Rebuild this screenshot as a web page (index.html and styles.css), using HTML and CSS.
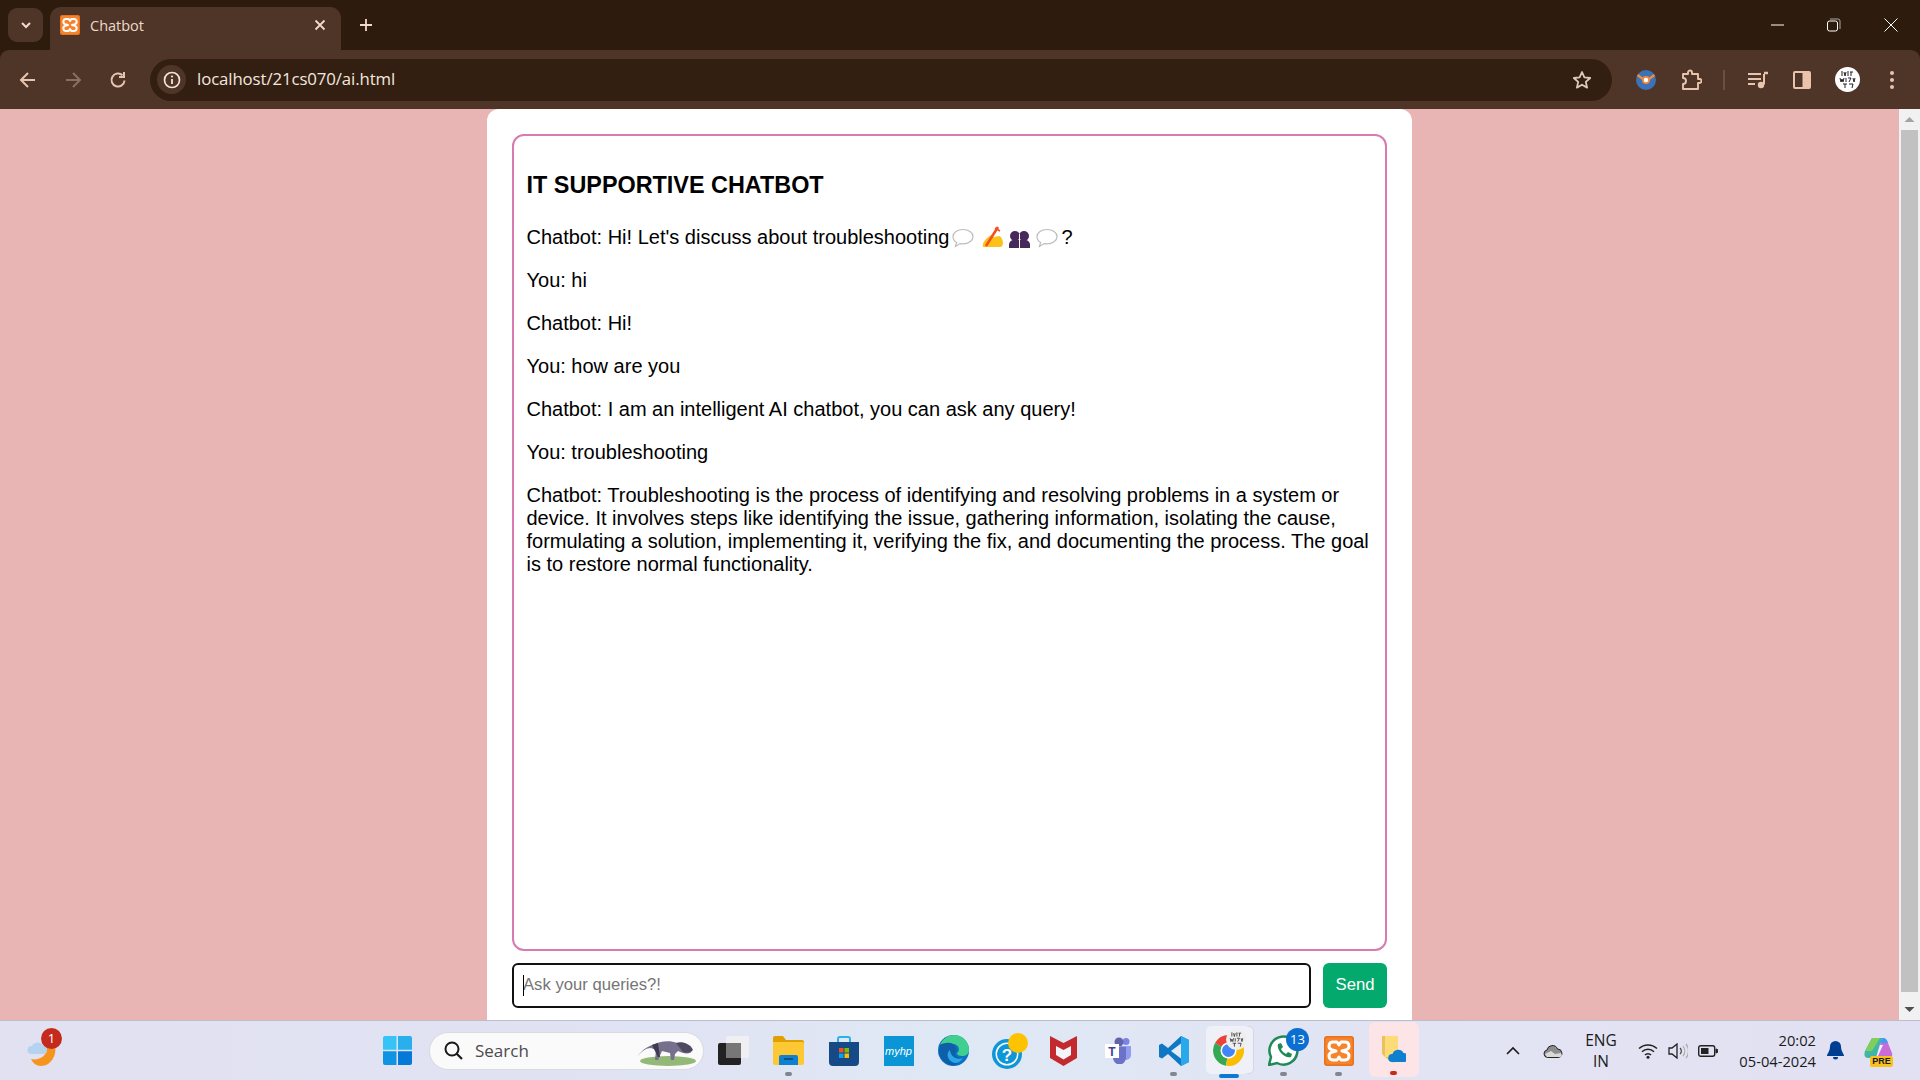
FILE: index.html
```html
<!DOCTYPE html>
<html lang="en">
<head>
  <meta charset="UTF-8">
  <title>Chatbot</title>
  <link rel="stylesheet" href="styles.css">
</head>
<body>
  <svg class="defs" width="0" height="0">
    <symbol id="xampp" viewBox="0 0 30 30">
      <rect width="30" height="30" rx="3" fill="#e9711f"/>
      <rect x="1.5" y="1.5" width="27" height="27" rx="2" fill="#f5842c"/>
      <path d="M13 6H9a4 4 0 0 0-1.500 7.700L12 15l-4.500 1.300A4 4 0 0 0 9 24h4l2-3 2 3h4a4 4 0 0 0 1.500-7.700L18 15l4.500-1.300A4 4 0 0 0 21 6h-4l-2 3z" fill="none" stroke="#fff" stroke-width="3" stroke-linejoin="round"/>
    </symbol>
    <symbol id="bubble" viewBox="0 0 22 20">
      <path d="M11 1.500c5.500 0 10 3.200 10 7.200s-4.500 7.200-10 7.200c-1 0-2-.1-2.900-.3L3.500 18.500l1.100-4C2.400 13.100 1 11 1 8.700 1 4.700 5.500 1.500 11 1.500z" fill="#fff" stroke="#bdbdbd" stroke-width="1.200"/>
    </symbol>
  </svg>

  <!-- browser top -->
  <header class="tabstrip">
    <div class="tab-list">
      <svg width="14" height="14" viewBox="0 0 14 14"><path d="M3 5l4 4 4-4" fill="none" stroke="#f2d9c9" stroke-width="2"/></svg>
    </div>
    <div class="tab">
      <svg class="favicon" width="20" height="20"><use href="#xampp"/></svg>
      <span class="tab-title">Chatbot</span>
      <svg width="14" height="14" viewBox="0 0 14 14"><path d="M2.500 2.500l9 9m0-9l-9 9" stroke="#f2d9c9" stroke-width="1.800"/></svg>
    </div>
    <div class="new-tab">
      <svg width="14" height="14" viewBox="0 0 14 14"><path d="M7 1v12M1 7h12" stroke="#f2d9c9" stroke-width="1.800"/></svg>
    </div>
    <div class="win-controls">
      <svg width="14" height="14" viewBox="0 0 14 14"><path d="M0 7h13" stroke="#fff"/></svg>
      <svg width="14" height="14" viewBox="0 0 14 14"><rect x=".5" y="3" width="10" height="10" rx="2" fill="none" stroke="#fff"/><path d="M3 1h8a2 2 0 0 1 2 2v8" fill="none" stroke="#aaa"/></svg>
      <svg width="14" height="14" viewBox="0 0 14 14"><path d="M.5.500l13 13m0-13l-13 13" stroke="#fff"/></svg>
    </div>
  </header>

  <nav class="toolbar">
    <div class="nav-btns">
      <svg width="20" height="20" viewBox="0 0 20 20"><path d="M17 10H4m6-7l-7 7 7 7" fill="none" stroke="#e8c4ae" stroke-width="2"/></svg>
      <svg width="20" height="20" viewBox="0 0 20 20"><path d="M3 10h13m-6-7l7 7-7 7" fill="none" stroke="#8b6f5e" stroke-width="2"/></svg>
      <svg width="20" height="20" viewBox="0 0 20 20"><path d="M16.500 10.500A6.500 6.500 0 1 1 14.500 5.300M16 2v5h-5" fill="none" stroke="#e8c4ae" stroke-width="2"/></svg>
    </div>
    <div class="omnibox">
      <div class="info-chip">
        <svg width="18" height="18" viewBox="0 0 18 18"><circle cx="9" cy="9" r="7.500" fill="none" stroke="#f4e3d8" stroke-width="1.700"/><path d="M9 8v5" stroke="#f4e3d8" stroke-width="1.800"/><circle cx="9" cy="5.500" r="1.100" fill="#f4e3d8"/></svg>
      </div>
      <span class="url">localhost/21cs070/ai.html</span>
      <svg class="star" width="20" height="20" viewBox="0 0 20 20"><path d="M10 2l2.400 5.400 5.800.6-4.400 3.900 1.300 5.700L10 14.700l-5.100 2.900 1.300-5.700L1.800 8l5.800-.6z" fill="none" stroke="#ddc9bb" stroke-width="1.800" stroke-linejoin="round"/></svg>
    </div>
    <div class="tool-icons">
      <svg class="tool-ext" width="20" height="20" viewBox="0 0 20 20"><circle cx="10" cy="10" r="10" fill="#3b72b8"/><path d="M1.500 5l6 4.500M18.500 5l-6 4.500" stroke="#f08a3c" stroke-width="2.400"/><circle cx="10" cy="10" r="4" fill="#f08a3c"/><circle cx="10" cy="10" r="2.200" fill="#fff"/></svg>
      <svg class="tool-puzzle" width="22" height="22" viewBox="0 0 22 22"><path d="M3 5h5V3.500a2 2 0 0 1 4 0V5h6v5h1.500a2 2 0 0 1 0 4H18v6H3v-5a3 3 0 0 0 0-6z" fill="none" stroke="#e8c4ae" stroke-width="1.900" stroke-linejoin="round"/></svg>
      <span class="tool-sep"></span>
      <svg class="tool-media" width="22" height="20" viewBox="0 0 22 20"><path d="M1 4h13M1 9h13M1 14h7" stroke="#e8c4ae" stroke-width="2"/><path d="M17 4v10.500" stroke="#e8c4ae" stroke-width="2"/><path d="M17 3h4" stroke="#e8c4ae" stroke-width="2.500"/><circle cx="14" cy="15" r="3.200" fill="#e8c4ae"/></svg>
      <svg class="tool-side" width="18" height="18" viewBox="0 0 18 18"><rect width="18" height="18" rx="2" fill="#e8c4ae"/><rect x="2" y="2" width="7.500" height="14" fill="#4f3527"/></svg>
      <svg class="tool-avatar" width="25" height="25" viewBox="0 0 25 25"><circle cx="12.500" cy="12.500" r="12.500" fill="#fff"/><path d="M7 4v5M9 5l1 4 1-4M13 4v5M15 5h3M16 5v4M5 11l1 4 1-3 1 3 1-4M11 11v4M13 11h3l-2 4M18 11l1 4 1-4M8 17h4M10 17v4M14 17h4l-1 4" fill="none" stroke="#222" stroke-width="1"/></svg>
      <svg class="tool-dots" width="6" height="20" viewBox="0 0 6 20"><circle cx="3" cy="3" r="2" fill="#e8c4ae"/><circle cx="3" cy="10" r="2" fill="#e8c4ae"/><circle cx="3" cy="17" r="2" fill="#e8c4ae"/></svg>
    </div>
  </nav>

  <!-- page -->
  <div class="viewport">
    <main class="page">
      <section class="container">
        <div class="chat-box">
          <h2 class="chat-title">IT SUPPORTIVE CHATBOT</h2>
          <p class="msg">Chatbot: Hi! Let's discuss about troubleshooting<svg class="emoji emoji-first" width="22" height="20"><use href="#bubble"/></svg><svg class="emoji emoji-hand" width="23" height="22" viewBox="0 0 23 22"><path d="M2 21c-1-3 1-6 4-9l4-3 3 2 5-1c2 0 4 4 4 7 0 2-1 4-3 4z" fill="#fcc21b"/><path d="M5 20L17 1" stroke="#f4511e" stroke-width="2.600"/><path d="M14 2l5 3" stroke="#f4511e" stroke-width="1.500"/></svg><svg class="emoji emoji-people" width="21" height="18" viewBox="0 0 21 18"><circle cx="6" cy="6" r="5" fill="#472a5c"/><circle cx="15" cy="6" r="5" fill="#472a5c"/><path d="M0 18v-3c0-3 2-5 5-5h11c3 0 5 2 5 5v3z" fill="#472a5c"/><path d="M10.500 4v14" stroke="#fff" stroke-width="1"/></svg><svg class="emoji" width="22" height="20"><use href="#bubble"/></svg><span class="emoji-q">?</span></p>
          <p class="msg">You: hi</p>
          <p class="msg">Chatbot: Hi!</p>
          <p class="msg">You: how are you</p>
          <p class="msg">Chatbot: I am an intelligent AI chatbot, you can ask any query!</p>
          <p class="msg">You: troubleshooting</p>
          <p class="msg">Chatbot: Troubleshooting is the process of identifying and resolving problems in a system or device. It involves steps like identifying the issue, gathering information, isolating the cause, formulating a solution, implementing it, verifying the fix, and documenting the process. The goal is to restore normal functionality.</p>
        </div>
        <form class="input-row">
          <div class="input-wrap">
            <input class="chat-input" type="text" placeholder="Ask your queries?!">
            <span class="caret"></span>
          </div>
          <button class="send-btn" type="button">Send</button>
        </form>
      </section>
    </main>
    <aside class="scrollbar">
      <svg width="21" height="21" viewBox="0 0 21 21"><path d="M5.500 13l5-5 5 5z" fill="#a3a3a3"/></svg>
      <div class="scroll-track"><div class="scroll-thumb"></div></div>
      <svg width="21" height="21" viewBox="0 0 21 21"><path d="M5.500 8l5 5 5-5z" fill="#505050"/></svg>
    </aside>
  </div>

  <!-- windows taskbar -->
  <footer class="taskbar">
    <div class="weather">
      <svg width="34" height="34" viewBox="0 0 34 34"><path d="M20 14c5 0 7-2 8-2 2 9-4 20-14 20-5 0-8-3-10-7 8 2 16-3 16-11z" fill="#f6951e"/><path d="M4 20a4 4 0 0 1 1-8 6 6 0 0 1 11 0 4 4 0 0 1 0 8z" fill="#b5d3f0"/></svg>
      <span class="weather-badge">1</span>
    </div>
    <div class="start">
      <svg width="29" height="29" viewBox="0 0 29 29"><path d="M0 2a2 2 0 0 1 2-2h11.500v13.700H0z" fill="#36c3f5"/><path d="M15 0h12a2 2 0 0 1 2 2v11.700H15z" fill="#29aeee"/><path d="M0 15.300h13.500V29H2a2 2 0 0 1-2-2z" fill="#0f93e3"/><path d="M15 15.300h14V27a2 2 0 0 1-2 2H15z" fill="#0579d8"/></svg>
    </div>
    <div class="search">
      <svg width="19" height="19" viewBox="0 0 19 19"><circle cx="8" cy="8" r="6.500" fill="none" stroke="#1a1a1a" stroke-width="2"/><path d="M12.500 12.500L18 18" stroke="#1a1a1a" stroke-width="2.200"/></svg>
      <span class="search-text">Search</span>
      <svg class="anteater" width="60" height="30" viewBox="0 0 60 30"><ellipse cx="32" cy="25" rx="28" ry="5" fill="#94b878"/><path d="M1 21c4-6 9-10 15-12 8-4 18-5 25-2 5 0 8 1 12 3 4 2 4 5 1 7-4 1-8 0-12-2l-3 3-1 6h-3l-1-7-8-2-4 9h-3l1-10-5-2c-5 0-9 3-14 9z" fill="#77708c"/><path d="M40 7c5-2 14 0 17 7-3 3-7 3-10 2z" fill="#4e4860"/><path d="M16 9l6-2 2 14h-2z" fill="#3f3a50"/></svg>
    </div>
    <div class="apps">
      <div class="app">
        <svg width="32" height="29" viewBox="0 0 32 29"><rect y="7" width="23" height="22" rx="2" fill="#222"/><rect x="8" y="0" width="23" height="22" rx="2" fill="#f0f0f3"/><rect x="8" y="7" width="15" height="15" fill="#777"/></svg>
      </div>
      <div class="app has-dot">
        <svg width="31" height="29" viewBox="0 0 31 29"><path d="M0 2a2 2 0 0 1 2-2h8l3 4h16a2 2 0 0 1 2 2v4H0z" fill="#e0a100"/><path d="M0 6h29a2 2 0 0 1 2 2v19a2 2 0 0 1-2 2H2a2 2 0 0 1-2-2z" fill="#fcc934"/><path d="M6 21a2 2 0 0 1 2-2h15a2 2 0 0 1 2 2v8H6z" fill="#0f7fd0"/><path d="M11 23h9" stroke="#08446f" stroke-width="1.500"/></svg>
      </div>
      <div class="app">
        <svg width="30" height="30" viewBox="0 0 30 30"><path d="M9 7V3a2 2 0 0 1 2-2h8a2 2 0 0 1 2 2v4" fill="none" stroke="#29b3e8" stroke-width="2"/><path d="M0 6h30v20a4 4 0 0 1-4 4H4a4 4 0 0 1-4-4z" fill="#164a86"/><rect x="10" y="12" width="4.500" height="4.500" fill="#f25022"/><rect x="15.500" y="12" width="4.500" height="4.500" fill="#7fba00"/><rect x="10" y="17.500" width="4.500" height="4.500" fill="#00a4ef"/><rect x="15.500" y="17.500" width="4.500" height="4.500" fill="#ffb900"/></svg>
      </div>
      <div class="app">
        <div class="myhp">myhp</div>
      </div>
      <div class="app">
        <svg width="31" height="31" viewBox="0 0 31 31"><circle cx="15.500" cy="15.500" r="15.500" fill="#0c71c4"/><path d="M2 10C5 3 11 0 16 0c8 0 15 6 15 15 0 4-3 6-7 6-3 0-5-1-5-3 3-1 3-8-3-9C9 8 4 9 2 10z" fill="#3fcf8e"/><path d="M2 10c4-3 14-4 16 3 1 3 0 4-1 5-1 3 4 6 8 5-3 5-8 8-12 7C7 29 2 23 1 17z" fill="#0f5ea8"/><path d="M12 15c-3 2-4 8 2 12 4 2 8 1 11-4-5 2-12 0-13-8z" fill="#2aa7e8"/></svg>
      </div>
      <div class="app">
        <svg class="help-icon" width="37" height="36" viewBox="0 0 37 36"><circle cx="15" cy="21" r="15" fill="#0f96d6"/><circle cx="15" cy="21" r="11.500" fill="#fff"/><circle cx="15" cy="21" r="10" fill="#0f96d6"/><text class="help-mark" x="15" y="28">?</text><ellipse cx="26" cy="10" rx="10" ry="10" fill="#fdc200"/></svg>
      </div>
      <div class="app">
        <svg width="27" height="30" viewBox="0 0 27 30"><path d="M0 0l13.500 7L27 0v22l-13.500 8L0 22z" fill="#c22a2e"/><path d="M6 10l7.500 4 7.500-4v9l-7.500 4.500L6 19z" fill="#f3f3fa"/></svg>
      </div>
      <div class="app">
        <svg width="27" height="27" viewBox="0 0 27 27"><circle cx="21" cy="4.500" r="3.500" fill="#7b83eb"/><path d="M15 9h11v9a5 5 0 0 1-10 0z" fill="#7b83eb" opacity=".75"/><circle cx="14" cy="5" r="4.500" fill="#6264a7"/><path d="M8 10h13v11a6 6 0 0 1-13 0z" fill="#6d72c9"/><rect y="7" width="14" height="14" fill="#fff"/><text class="teams-mark" x="7" y="19">T</text></svg>
      </div>
      <div class="app has-dot">
        <svg width="30" height="30" viewBox="0 0 30 30"><path d="M22 0l8 4v22l-8 4-13-12-6 4.500L0 21v-12l3-1.500L9 12z" fill="#0f77c4"/><path d="M22 0l8 4v22l-8 4z" fill="#29a9ec"/><path d="M22 7.500L12 15l10 7.500z" fill="#e3edf7"/></svg>
      </div>
      <div class="app app-active">
        <div class="active-stack"></div>
        <div class="active-box"></div>
        <svg class="chrome-icon" width="31" height="31" viewBox="0 0 31 31"><path d="M15.500 15.500L2 8A15.500 15.500 0 0 1 29 8z" fill="#ea4335"/><path d="M15.500 15.500L2 8a15.500 15.500 0 0 0 11 22.800z" fill="#34a853"/><path d="M15.500 15.500L29 8a15.500 15.500 0 0 1-16 22.800z" fill="#fbbc04"/><circle cx="15.500" cy="15.500" r="8" fill="#fff"/><circle cx="15.500" cy="15.500" r="6.500" fill="#4285f4"/></svg>
        <svg class="chrome-avatar" width="21" height="21" viewBox="0 0 25 25"><circle cx="12.500" cy="12.500" r="12.500" fill="#eee"/><path d="M7 4v5M9 5l1 4 1-4M13 4v5M15 5h3M16 5v4M5 11l1 4 1-3 1 3 1-4M11 11v4M13 11h3l-2 4M18 11l1 4 1-4M8 17h4M10 17v4M14 17h4l-1 4" fill="none" stroke="#444" stroke-width="1.100"/></svg>
        <span class="active-bar"></span>
      </div>
      <div class="app has-dot">
        <svg width="31" height="31" viewBox="0 0 31 31"><path d="M1 30l2-8A14 14 0 1 1 9 28z" fill="#fff" stroke="#1f8a56" stroke-width="2.500"/><path d="M10 9l3-1 2 4-2 2c1 2 3 4 5 5l2-2 4 2-1 3c-6 2-15-7-13-13z" fill="#1f8a56"/></svg>
        <span class="wa-badge">13</span>
      </div>
      <div class="app has-dot">
        <svg width="30" height="30"><use href="#xampp"/></svg>
      </div>
      <div class="app app-pinned">
        <svg width="24" height="30" viewBox="0 0 24 30"><path d="M0 1l12 0v27L4 23 0 19z" fill="#e9c25a"/><path d="M3 1h13v21H3z" fill="#fbdc79"/><path d="M9 30a4 4 0 0 1 .5-8 6 6 0 0 1 11-1 4.500 4.500 0 0 1 .5 9z" transform="translate(1 -3)" fill="#0f7fd0"/></svg>
        <span class="red-dot"></span>
      </div>
    </div>
    <div class="tray">
      <svg class="tray-chevron" width="14" height="9" viewBox="0 0 14 9"><path d="M1 8l6-6 6 6" fill="none" stroke="#1a1a1a" stroke-width="1.600"/></svg>
      <svg class="tray-cloud" width="20" height="14" viewBox="0 0 20 14"><path d="M4.500 13.500a3.800 3.800 0 0 1-.5-7.500 5.500 5.500 0 0 1 10.500-1 4.300 4.300 0 0 1 1 8.500z" fill="#8d8d8d" stroke="#222" stroke-width="1"/><path d="M2 10l6-3 4 3 6-1 1 3-2 1H4z" fill="#d9d9d9"/></svg>
      <div class="lang">ENG<br>IN</div>
      <svg class="tray-wifi" width="20" height="16" viewBox="0 0 20 16"><path d="M1 5.500a13 13 0 0 1 18 0M4 8.800a8.500 8.500 0 0 1 12 0M7 12a4 4 0 0 1 6 0" fill="none" stroke="#222" stroke-width="1.500"/><circle cx="10" cy="14.300" r="1.500" fill="#222"/></svg>
      <svg class="tray-vol" width="20" height="16" viewBox="0 0 20 16"><path d="M1 5h3l5-4v14l-5-4H1z" fill="none" stroke="#222" stroke-width="1.300"/><path d="M12 5a4 4 0 0 1 0 6" fill="none" stroke="#444" stroke-width="1.200"/><path d="M15 3a8 8 0 0 1 0 10M18 1a11 11 0 0 1 0 14" fill="none" stroke="#aaa" stroke-width="1.200"/></svg>
      <svg class="tray-batt" width="20" height="12" viewBox="0 0 20 12"><rect x=".7" y=".7" width="16" height="10.600" rx="2" fill="none" stroke="#222" stroke-width="1.400"/><rect x="3" y="3" width="7.500" height="6" fill="#222"/><path d="M18 4v4a2 2 0 0 0 0-4z" fill="#222" stroke="#222"/></svg>
      <div class="clock">20:02<br>05-04-2024</div>
      <svg class="tray-bell" width="17" height="19" viewBox="0 0 17 19"><path d="M8.500 0a5.500 5.500 0 0 1 5.500 5.500c0 5 3 7 3 9.500H0c0-2.500 3-4.500 3-9.500A5.500 5.500 0 0 1 8.500 0z" fill="#003e92"/><path d="M6 16h5a2.500 2.500 0 0 1-5 0z" fill="#003e92"/></svg>
      <div class="copilot">
        <svg width="29" height="22" viewBox="0 0 29 22"><path d="M8 1h10l-6 20H4C0 21 0 17 1 14z" fill="#3fb6a8"/><path d="M8 1h8L8 14H1z" fill="#7fcf5a"/><path d="M18 1c4 0 5 2 6 5l4 10c1 3-1 5-4 5H12z" fill="#c86dd7"/><path d="M18 1c4 0 5 2 6 5h-8z" fill="#3a9ff0"/><path d="M16 8l3 0-6 13h-1z" fill="#f4f4ff"/></svg>
        <span class="pre-tag">PRE</span>
      </div>
    </div>
  </footer>
</body>
</html>
```

FILE: styles.css
```css
* { box-sizing: border-box; }
html, body { height: 100%; }
body {
  margin: 0;
  display: flex;
  flex-direction: column;
  overflow: hidden;
  background: #2d1b0e;
  font-family: "Liberation Sans", Arial, sans-serif;
}
.defs { display: block; height: 0; }

/* tab strip */
.tabstrip {
  height: 50px;
  flex: none;
  display: flex;
  align-items: flex-end;
  background: #2d1b0e;
  padding-left: 8px;
}
.tab-list {
  width: 35px;
  height: 34px;
  margin: 0 7px 8px 0;
  border-radius: 9px;
  background: #4f3527;
  display: flex;
  align-items: center;
  justify-content: center;
}
.tab {
  width: 291px;
  height: 43px;
  border-radius: 11px 11px 0 0;
  background: #4f3527;
  display: flex;
  align-items: center;
  padding: 0 14px 7px 10px;
}
.favicon { margin-right: 10px; }
.tab-title { flex: 1; font: 14.500px "Open Sans", "Noto Sans", sans-serif; color: #ecd9cc; }
.new-tab {
  width: 50px;
  height: 50px;
  display: flex;
  align-items: center;
  justify-content: center;
}
.win-controls {
  margin-left: auto;
  height: 50px;
  display: flex;
  align-items: center;
  gap: 42px;
  padding-right: 22px;
}
.win-controls svg:nth-child(2) { margin-right: 1px; }

/* toolbar */
.toolbar {
  height: 59px;
  flex: none;
  display: flex;
  align-items: center;
  background: #4f3527;
  border-radius: 9px 9px 0 0;
}
.nav-btns {
  width: 150px;
  flex: none;
  display: flex;
  gap: 25px;
  padding-left: 18px;
}
.omnibox {
  width: 1462px;
  flex: none;
  height: 42px;
  border-radius: 21px;
  background: #321f12;
  display: flex;
  align-items: center;
  padding: 0 20px 0 7px;
}
.info-chip {
  width: 29px;
  height: 29px;
  border-radius: 50%;
  background: #4f3527;
  display: flex;
  align-items: center;
  justify-content: center;
  margin-right: 11px;
}
.url { flex: 1; font: 16.800px/22px "Open Sans", "Noto Sans", sans-serif; color: #f3e7de; letter-spacing: -.1px; margin-top: -2px; }
.tool-icons { flex: 1; display: flex; align-items: center; }
.tool-ext { margin-left: 24px; }
.tool-puzzle { margin-left: 24px; }
.tool-sep { width: 2px; height: 20px; background: #6a5040; margin-left: 21px; }
.tool-media { margin-left: 22px; }
.tool-side { margin-left: 24px; }
.tool-avatar { margin-left: 24px; }
.tool-dots { margin-left: 29px; }

/* page */
.viewport { flex: 1; min-height: 0; display: flex; }
.page {
  flex: 1;
  min-width: 0;
  background: #e8b4b4;
  display: flex;
  justify-content: center;
  overflow: hidden;
}
.container {
  width: 925px;
  height: 940px;
  flex: none;
  background: #fff;
  border-radius: 12px 12px 0 0;
  padding: 25px 25px 0;
}
.chat-box {
  height: 817px;
  border: 2.500px solid #d97ab0;
  border-radius: 12px;
  padding: 12.500px;
  font-size: 20px;
  color: #000;
}
.chat-title { margin: 22px 0 27px; font-size: 23.400px; line-height: 28px; font-weight: bold; }
.msg { margin: 0 0 20px; line-height: 23px; }
.emoji { vertical-align: -4px; margin-left: 1px; margin-right: 5px; }
.emoji-first { margin-left: 3px; margin-right: 6px; }
.emoji-hand { margin-right: 5px; }
.emoji-people { margin-left: 0; margin-right: 5px; }
.emoji-q { margin-left: -2px; }
.input-row { display: flex; gap: 12.500px; margin-top: 11.500px; }
.input-wrap { flex: 1; position: relative; }
.chat-input {
  display: block;
  width: 100%;
  height: 45px;
  border: 2.500px solid #111;
  border-radius: 6px;
  padding: 0 9px;
  font: 16.670px "Liberation Sans", Arial, sans-serif;
  outline: none;
  caret-color: transparent;
}
.chat-input::placeholder { color: #757575; }
.caret { position: absolute; left: 11px; top: 12px; width: 1px; height: 21px; background: #000; }
.send-btn {
  width: 64px;
  height: 45px;
  border: none;
  border-radius: 6px;
  background: #04aa6d;
  color: #fff;
  font: 16.670px "Liberation Sans", Arial, sans-serif;
}

/* scrollbar */
.scrollbar {
  width: 21px;
  flex: none;
  background: #f1f1f1;
  display: flex;
  flex-direction: column;
}
.scroll-track { flex: 1; padding: 0 2px; }
.scroll-thumb { height: 862px; background: #c1c1c1; }

/* taskbar */
.taskbar {
  height: 60px;
  flex: none;
  display: flex;
  align-items: center;
  border-top: 1px solid #bdbccd;
  background: linear-gradient(90deg, #e2e1f2 0%, #e0e3f3 35%, #dfe8f5 50%, #e2e3f3 75%, #e2e1f3 100%);
  font-family: "Open Sans", "Noto Sans", sans-serif;
}
.weather { position: relative; width: 34px; height: 34px; margin-left: 27px; }
.weather-badge {
  position: absolute;
  top: -6px;
  right: -1px;
  width: 21px;
  height: 21px;
  border-radius: 50%;
  background: #c42b1c;
  color: #fff;
  font-size: 13px;
  line-height: 21px;
  text-align: center;
}
.start { margin-left: 322px; width: 29px; height: 29px; }
.search {
  width: 275px;
  height: 38px;
  margin-left: 17px;
  border-radius: 19px;
  border: 1px solid #d9d9e2;
  background: #fafafb;
  display: flex;
  align-items: center;
  padding-left: 14px;
}
.search-text { flex: 1; margin-left: 12px; font-size: 17px; color: #4b4b4b; }
.anteater { margin-right: 7px; }
.apps { display: flex; margin-left: 2px; }
.app {
  width: 55px;
  height: 59px;
  position: relative;
  display: flex;
  align-items: center;
  justify-content: center;
}
.has-dot::after {
  content: "";
  position: absolute;
  left: 24px;
  bottom: 4px;
  width: 7px;
  height: 4px;
  border-radius: 2px;
  background: #85858f;
}
.myhp {
  width: 30px;
  height: 30px;
  background: #0a96d6;
  color: #fff;
  font: italic 11px "Liberation Sans", sans-serif;
  line-height: 30px;
  text-align: center;
}
.help-icon { margin-left: 4px; }
.help-mark { font: bold 17px "Liberation Sans", sans-serif; fill: #fff; text-anchor: middle; }
.teams-mark { font: bold 12px "Liberation Sans", sans-serif; fill: #3f4294; text-anchor: middle; }
.active-box {
  position: absolute;
  left: 5px;
  top: 5px;
  width: 44px;
  height: 48px;
  border-radius: 5px;
  background: #eff0f8;
}
.active-stack {
  position: absolute;
  left: 9px;
  top: 5px;
  width: 44px;
  height: 48px;
  border-radius: 5px;
  background: #f0f1f8;
  border: 1px solid #d4d6e4;
}
.chrome-icon { position: relative; }
.chrome-avatar { position: absolute; left: 25px; top: 8px; }
.active-bar {
  position: absolute;
  left: 18px;
  bottom: 2px;
  width: 20px;
  height: 4px;
  border-radius: 2px;
  background: #0f78d4;
}
.wa-badge {
  position: absolute;
  top: 7px;
  left: 30px;
  width: 23px;
  height: 23px;
  border-radius: 50%;
  background: #0b6fd2;
  color: #fff;
  font-size: 13px;
  line-height: 23px;
  text-align: center;
}
.app-pinned { background: #fde4e6; border-radius: 6px; height: 55px; margin-top: 1px; width: 50px; margin-left: 3px; }
.red-dot {
  position: absolute;
  left: 21px;
  bottom: 2px;
  width: 7px;
  height: 4px;
  border-radius: 2px;
  background: #c42b1c;
}
.tray { flex: 1; display: flex; align-items: center; padding-left: 87px; color: #1a1a1a; }
.tray-cloud { margin-left: 23px; }
.lang { width: 48px; margin-left: 14px; font-size: 15.500px; line-height: 21px; text-align: center; }
.tray-wifi { margin-left: 13px; }
.tray-vol { margin-left: 10px; }
.tray-batt { margin-left: 10px; }
.clock { width: 98px; font-size: 14.700px; line-height: 21px; text-align: right; }
.tray-bell { margin-left: 11px; }
.copilot { position: relative; width: 29px; height: 28px; margin-left: 20px; }
.pre-tag {
  position: absolute;
  left: 6px;
  bottom: -2px;
  width: 23px;
  height: 11px;
  border-radius: 2px;
  background: #f9c21a;
  color: #1a1a1a;
  font: bold 9px "Liberation Sans", sans-serif;
  line-height: 11px;
  text-align: center;
}
```
